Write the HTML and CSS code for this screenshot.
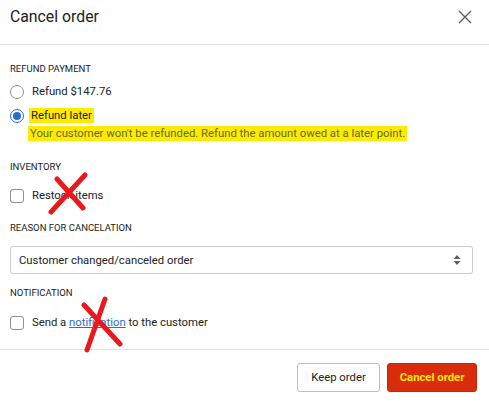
FILE: index.html
```html
<!DOCTYPE html>
<html lang="en">
<head>
  <meta charset="UTF-8" />
  <meta name="viewport" content="width=device-width, initial-scale=1.0" />
  <title>Cancel order</title>
  <link rel="stylesheet" href="styles.css">
</head>
<body>
<div class="modal">
  <div class="modal-header">
    <h1>Cancel order</h1>
    <button class="close-btn" aria-label="Close">
      <svg width="14" height="14" viewBox="0 0 14 14"><path d="M1 1 L13 13 M13 1 L1 13" stroke="#5c5f62" stroke-width="1.4" fill="none"/></svg>
    </button>
  </div>

  <div class="modal-body">
    <div class="section section-refund">
      <div class="section-title">Refund payment</div>
      <label class="choice">
        <span class="radio"></span>
        <span class="choice-label">Refund $147.76</span>
      </label>
      <label class="choice choice-later">
        <span class="radio checked"></span>
        <span class="choice-label"><mark>Refund later</mark></span>
      </label>
      <div class="help"><mark>Your customer won't be refunded. Refund the amount owed at a later point.</mark></div>
    </div>

    <div class="section section-inventory">
      <div class="section-title">Inventory</div>
      <label class="choice">
        <span class="checkbox"></span>
        <span class="choice-label">Restock items</span>
      </label>
      <svg class="scribble scribble-1" width="44" height="44" viewBox="0 0 44 44">
        <path d="M38 3 L4 40 M10 7 L36 36" stroke="#e8191c" stroke-width="5" stroke-linecap="round" fill="none"/>
      </svg>
    </div>

    <div class="section section-reason">
      <div class="section-title">Reason for cancelation</div>
      <div class="select">
        <span>Customer changed/canceled order</span>
        <svg width="8" height="12" viewBox="0 0 8 12"><path d="M4 1 L7.5 5 H0.5 Z M4 11 L7.5 7 H0.5 Z" fill="#5c5f62"/></svg>
      </div>
    </div>

    <div class="section section-notify">
      <div class="section-title">Notification</div>
      <label class="choice">
        <span class="checkbox"></span>
        <span class="choice-label">Send a <a href="#">notification</a> to the customer</span>
      </label>
      <svg class="scribble scribble-2" width="46" height="58" viewBox="0 0 46 58">
        <path d="M25 3 L7 54 M4 9 L40 48" stroke="#e8191c" stroke-width="5" stroke-linecap="round" fill="none"/>
      </svg>
    </div>
  </div>

  <div class="modal-footer">
    <button class="btn btn-plain">Keep order</button>
    <button class="btn btn-danger">Cancel order</button>
  </div>
</div>
</body>
</html>
```
FILE: styles.css
```css
* { box-sizing: border-box; margin: 0; padding: 0; }

body {
  font-family: Roboto, "Liberation Sans", sans-serif;
  font-size: 11.3px;
  color: #202223;
  background: #ffffff;
}

.modal {
  width: 489px;
  height: 401px;
  background: #ffffff;
}

.modal-header {
  height: 45px;
  border-bottom: 1px solid #e1e3e5;
  display: flex;
  justify-content: space-between;
  align-items: flex-start;
  padding: 7px 17px 0 10px;
}
.modal-header h1 {
  font-size: 15.8px;
  font-weight: 400;
  color: #202223;
  line-height: 20px;
}
.close-btn {
  border: none;
  background: none;
  width: 14px;
  height: 14px;
  margin-top: 3px;
  cursor: pointer;
}
.close-btn svg { display: block; }

.modal-body {
  padding: 0 16px 0 10px;
  height: 305px;
  border-bottom: 1px solid #e1e3e5;
}

.section { position: relative; }
.section-title {
  font-size: 9.5px;
  text-transform: uppercase;
  line-height: 12px;
  color: #202223;
}
.section-refund { padding-top: 18px; }
.section-refund .section-title { margin-bottom: 10px; }
.section-inventory { padding-top: 19px; }
.section-inventory .section-title { margin-bottom: 16px; }
.section-reason { padding-top: 19px; }
.section-reason .section-title { margin-bottom: 12px; }
.section-notify { padding-top: 13px; }
.section-notify .section-title { margin-bottom: 17px; }

.choice {
  display: flex;
  align-items: center;
  gap: 8px;
  height: 14px;
}
.choice-later { margin-top: 10px; }
.choice-label { line-height: 16px; }

.radio {
  width: 14px;
  height: 14px;
  border: 1px solid #8c9196;
  border-radius: 50%;
  flex-shrink: 0;
  position: relative;
}
.radio.checked { border-color: #2c6ecb; }
.radio.checked::after {
  content: "";
  position: absolute;
  left: 2px;
  top: 2px;
  width: 8px;
  height: 8px;
  border-radius: 50%;
  background: #2c6ecb;
}

.checkbox {
  width: 14px;
  height: 14px;
  border: 1px solid #8c9196;
  border-radius: 3px;
  flex-shrink: 0;
}

mark {
  background: #ffeb00;
  color: #202223;
  padding: 1px 2px 1px 2px;
  margin-left: -3px;
}
.help {
  margin-top: 2px;
  padding-left: 21px;
  line-height: 17px;
}
.help mark {
  color: #5f6a2c;
  padding: 1px 2px;
}

.select {
  height: 28px;
  border: 1px solid #c9cccf;
  border-radius: 3px;
  display: flex;
  align-items: center;
  justify-content: space-between;
  padding: 0 11px 0 8px;
}

a {
  color: #2c6ecb;
  text-decoration: underline;
}

.scribble {
  position: absolute;
  pointer-events: none;
}
.scribble-1 { left: 37px; top: 30px; }
.scribble-2 { left: 70px; top: 22px; }

.modal-footer {
  display: flex;
  justify-content: flex-end;
  gap: 7px;
  padding: 13px 12px 0 0;
}
.btn {
  height: 29px;
  font-family: inherit;
  font-size: 11.3px;
  border-radius: 3px;
  cursor: pointer;
}
.btn-plain {
  width: 83px;
  background: #ffffff;
  border: 1px solid #babfc3;
  color: #202223;
}
.btn-danger {
  width: 90px;
  background: #d82c0d;
  border: 1px solid #c02a0f;
  color: #ffea00;
  font-weight: 700;
}
```
